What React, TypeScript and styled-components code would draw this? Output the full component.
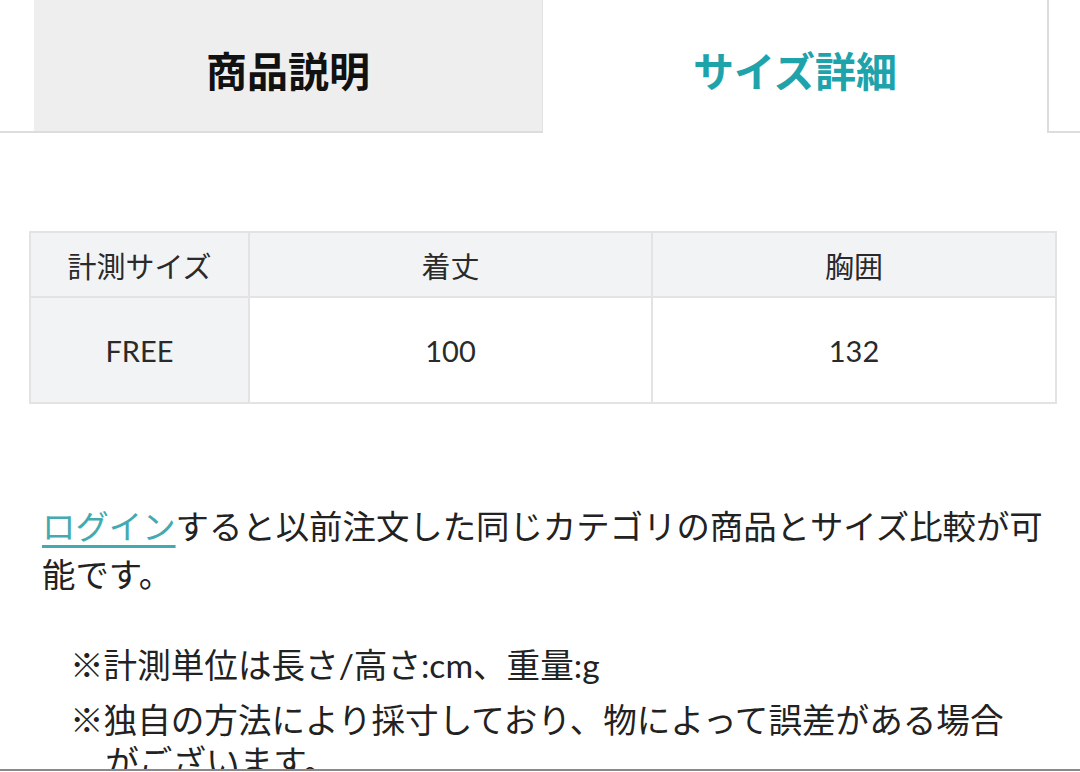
import * as React from "react";
import styled, { createGlobalStyle } from "styled-components";

// ================================================================================
//  Global
// ================================================================================

const GlobalStyle = createGlobalStyle`
  html, body {
    margin: 0;
    padding: 0;
    background: #ffffff;
    overflow: hidden;
  }
  body {
    font-family: Lato, "Noto Sans CJK JP", sans-serif;
    color: #222222;
  }
`;

// ================================================================================
//  Tabs
// ================================================================================

const TabBar = styled.div`
  display: flex;
  height: 133px;
`;

const TabSpacer = styled.div`
  width: 34px;
  border-bottom: 2px solid #dddddd;
`;

const Tab = styled.div<{ $active?: boolean }>`
  box-sizing: border-box;
  width: ${(p) => (p.$active ? "504px" : "509px")};
  display: flex;
  align-items: center;
  justify-content: center;
  padding-top: 6px;
  background: ${(p) => (p.$active ? "#ffffff" : "#eeeeee")};
  border-bottom: 2px solid ${(p) => (p.$active ? "transparent" : "#dddddd")};
  border-right: ${(p) => (p.$active ? "none" : "1px solid #e2e2e2")};
  color: ${(p) => (p.$active ? "#1fa3ab" : "#111111")};
  font-family: "Noto Sans CJK JP", sans-serif;
  font-weight: 700;
  font-size: 41px;
`;

const TabRest = styled.div`
  flex: 1;
  border-left: 2px solid #dddddd;
  border-bottom: 2px solid #dddddd;
`;

// ================================================================================
//  Size table
// ================================================================================

const SizeTable = styled.table`
  margin: 98px 25px 0 29px;
  width: 1026px;
  border-collapse: collapse;
  table-layout: fixed;
  font-size: 29px;
  color: #2a2a2a;
`;

const HeadCell = styled.th`
  height: 63px;
  padding: 0;
  background: #f2f3f5;
  border: 2px solid #e3e3e3;
  font-weight: 400;
  text-align: center;
`;

const BodyCell = styled.td<{ $label?: boolean }>`
  height: 104px;
  padding: 0;
  background: ${(p) => (p.$label ? "#f2f3f5" : "#ffffff")};
  border: 2px solid #e3e3e3;
  text-align: center;
`;

// ================================================================================
//  Texts
// ================================================================================

const Lead = styled.p`
  margin: 98px 30px 0 42px;
  font-size: 33.4px;
  line-height: 48px;
  color: #222222;
`;

const LoginLink = styled.a`
  color: #43aab1;
  text-decoration: underline;
  text-decoration-thickness: 3px;
  text-underline-offset: 6px;
`;

const Notes = styled.ul`
  list-style: none;
  margin: 46px 60px 0 70px;
  padding: 0;
  display: flex;
  flex-direction: column;
  gap: 13px;
`;

const Note = styled.li`
  padding-left: 1.05em;
  text-indent: -1.05em;
  font-size: 33.6px;
  line-height: 42px;
  color: #222222;
`;

const BottomEdge = styled.div`
  position: fixed;
  left: 0;
  right: 0;
  bottom: 0;
  height: 3px;
  background: #ffffff;
  border-top: 2px solid #8a8a8a;
  box-sizing: border-box;
`;

// ================================================================================
//  Data
// ================================================================================

const columns = ["計測サイズ", "着丈", "胸囲"];
const rows = [["FREE", "100", "132"]];
const notes = [
  "※計測単位は長さ/高さ:cm、重量:g",
  "※独自の方法により採寸しており、物によって誤差がある場合がございます。",
];

// ================================================================================
//  The main component
// ================================================================================

export default function App() {
  return (
    <>
      <GlobalStyle />
      <TabBar>
        <TabSpacer />
        <Tab>商品説明</Tab>
        <Tab $active>サイズ詳細</Tab>
        <TabRest />
      </TabBar>

      <SizeTable>
        <colgroup>
          <col style={{ width: "219px" }} />
          <col style={{ width: "403px" }} />
          <col style={{ width: "404px" }} />
        </colgroup>
        <thead>
          <tr>
            {columns.map((c) => (
              <HeadCell key={c}>{c}</HeadCell>
            ))}
          </tr>
        </thead>
        <tbody>
          {rows.map((r) => (
            <tr key={r[0]}>
              {r.map((v, i) => (
                <BodyCell key={i} $label={i === 0}>
                  {v}
                </BodyCell>
              ))}
            </tr>
          ))}
        </tbody>
      </SizeTable>

      <Lead>
        <LoginLink href="#">ログイン</LoginLink>
        すると以前注文した同じカテゴリの商品とサイズ比較が可能です。
      </Lead>

      <Notes>
        {notes.map((n) => (
          <Note key={n}>{n}</Note>
        ))}
      </Notes>

      <BottomEdge />
    </>
  );
}
